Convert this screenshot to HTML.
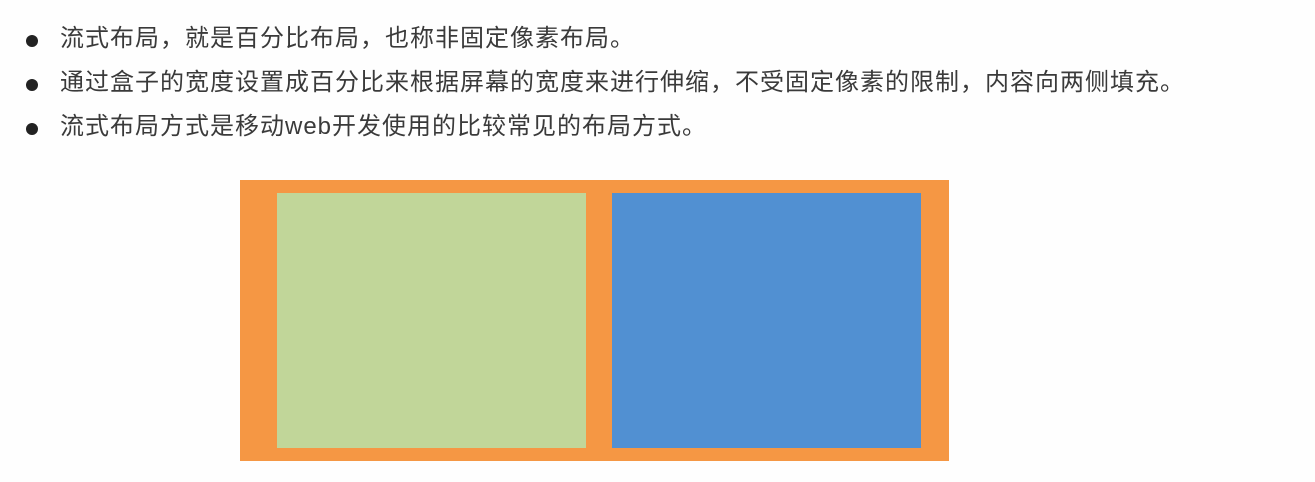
<!DOCTYPE html>
<html><head><meta charset="utf-8"><style>
body{margin:0;width:1315px;height:482px;background:#fefefe;position:relative;overflow:hidden;font-family:"Liberation Sans","Noto Sans CJK SC",sans-serif;}
.l{position:absolute;left:60px;font-size:24px;letter-spacing:1px;color:#3a3a3a;line-height:30px;white-space:nowrap}
.b{position:absolute;left:26px;width:12px;height:12px;border-radius:50%;background:#222}
.r{position:absolute}
</style></head><body>
<div class="b" style="top:35px"></div><div class="l" style="top:24px">流式布局，就是百分比布局，也称非固定像素布局。</div>
<div class="b" style="top:79px"></div><div class="l" style="top:68px">通过盒子的宽度设置成百分比来根据屏幕的宽度来进行伸缩，不受固定像素的限制，内容向两侧填充。</div>
<div class="b" style="top:123px"></div><div class="l" style="top:112px">流式布局方式是移动web开发使用的比较常见的布局方式。</div>
<div class="r" style="left:240px;top:180px;width:709px;height:281px;background:#f59744"></div>
<div class="r" style="left:277px;top:193px;width:309px;height:255px;background:#c1d699"></div>
<div class="r" style="left:612px;top:193px;width:309px;height:255px;background:#5190d2"></div>
</body></html>
